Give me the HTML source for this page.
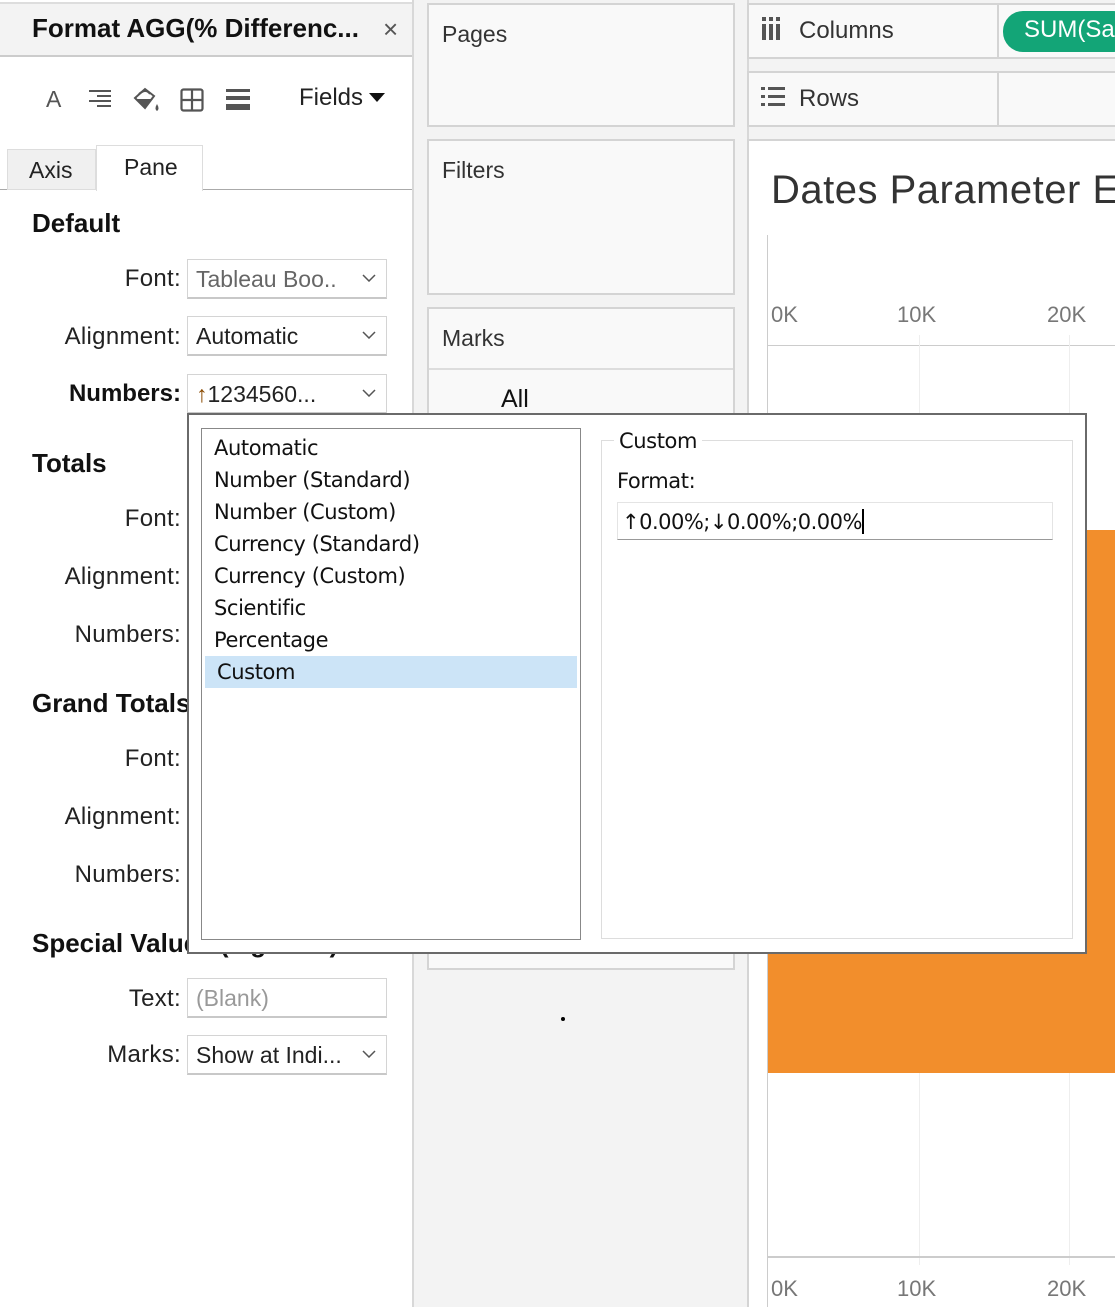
<!DOCTYPE html>
<html><head><meta charset="utf-8"><style>
*{margin:0;padding:0;box-sizing:border-box}
body{width:1115px;height:1307px;position:relative;overflow:hidden;background:#f3f3f3;font-family:"Liberation Sans","DejaVu Sans",sans-serif;color:#111}
.a{position:absolute}
.lbl{position:absolute;font-size:24px;color:#222;text-align:right;width:181px;left:0;letter-spacing:0.3px}
.dd{position:absolute;left:187px;width:200px;height:40px;background:#fff;border:1px solid #d4d4d4;border-bottom:2px solid #c8c8c8;font-size:23px;padding:6px 0 0 8px;color:#222;white-space:nowrap;overflow:hidden}
.dd svg{position:absolute;right:10px;top:14px}
.h{position:absolute;left:32px;font-size:26px;font-weight:bold;color:#111;white-space:nowrap}
.card{position:absolute;background:#f9f9f9;border:2px solid #d4d4d4}
.ct{position:absolute;left:13px;font-size:23px;color:#333}
.li{height:32px;font-size:21px;padding:4px 0 0 12px;font-family:"DejaVu Sans",sans-serif;color:#111;letter-spacing:-0.4px}
.ax{position:absolute;font-size:22px;color:#777}
</style></head><body>
<!-- left panel -->
<div class="a" style="left:0;top:0;width:414px;height:1307px;background:#fff;border-right:2px solid #d8d8d8;overflow:hidden">
<div class="a" style="left:0;top:2px;width:413px;height:55px;background:#f3f3f3;border-top:2px solid #ddd;border-bottom:2px solid #ccc"></div>
<div class="a" style="left:32px;top:13px;font-size:26px;font-weight:bold">Format AGG(% Differenc...</div>
<div class="a" style="left:383px;top:14px;font-size:26px;color:#555">×</div>
<div class="a" style="left:46px;top:86px;font-size:23px;color:#555">A</div>
<svg class="a" style="left:89px;top:89px" width="22" height="20"><g stroke="#555" stroke-width="2"><line x1="0" y1="2" x2="22" y2="2"/><line x1="8" y1="7" x2="22" y2="7"/><line x1="0" y1="12" x2="22" y2="12"/><line x1="8" y1="17" x2="22" y2="17"/></g></svg>
<svg class="a" style="left:132px;top:86px" width="30" height="28"><path d="M3 12 L13 3 L22 10 L13 22 Z" fill="none" stroke="#555" stroke-width="2"/><path d="M4 13 L21 13 L13 22 Z" fill="#555"/><path d="M7 8 Q14 2 18 8" fill="none" stroke="#555" stroke-width="2"/><path d="M25 18 Q22 23 25 25 Q28 23 25 18Z" fill="#555"/></svg>
<svg class="a" style="left:180px;top:88px" width="24" height="24"><rect x="1.5" y="1.5" width="21" height="21" rx="2" fill="none" stroke="#555" stroke-width="2.2"/><line x1="12" y1="1" x2="12" y2="23" stroke="#555" stroke-width="2.2"/><line x1="1" y1="12" x2="23" y2="12" stroke="#555" stroke-width="2.2"/></svg>
<svg class="a" style="left:226px;top:89px" width="24" height="22"><rect x="0" y="0" width="24" height="3" fill="#555"/><rect x="0" y="7" width="24" height="4" fill="#555"/><rect x="0" y="15" width="24" height="6" fill="#555"/></svg>
<div class="a" style="left:299px;top:84px;font-size:24px;color:#222">Fields</div>
<svg class="a" style="left:369px;top:93px" width="16" height="10"><path d="M0 0H16L8 9Z" fill="#111"/></svg>
<div class="a" style="left:0;top:189px;width:412px;height:1px;background:#aaa"></div>
<div class="a" style="left:7px;top:149px;width:89px;height:41px;background:#f0f0f0;border:1px solid #ddd;font-size:23px;padding:7px 0 0 21px;color:#222">Axis</div>
<div class="a" style="left:96px;top:145px;width:107px;height:46px;background:#fff;border:1px solid #ddd;border-bottom:none;font-size:23px;padding:8px 0 0 27px;color:#222">Pane</div>
<div class="h" style="top:208px">Default</div>
<div class="lbl" style="top:265px">Font:</div><div class="dd" style="top:259px;color:#666">Tableau Boo..<svg width="14" height="8"><path d="M1 1L7 7L13 1" fill="none" stroke="#555" stroke-width="1.5"/></svg></div>
<div class="lbl" style="top:323px">Alignment:</div><div class="dd" style="top:316px">Automatic<svg width="14" height="8"><path d="M1 1L7 7L13 1" fill="none" stroke="#555" stroke-width="1.5"/></svg></div>
<div class="lbl" style="top:380px;font-weight:bold;color:#111;letter-spacing:0">Numbers:</div><div class="dd" style="top:374px"><span style="color:#8a4a00">↑</span>1234560...<svg width="14" height="8"><path d="M1 1L7 7L13 1" fill="none" stroke="#555" stroke-width="1.5"/></svg></div>
<div class="h" style="top:448px">Totals</div>
<div class="lbl" style="top:505px">Font:</div>
<div class="lbl" style="top:563px">Alignment:</div>
<div class="lbl" style="top:621px">Numbers:</div>
<div class="h" style="top:688px">Grand Totals</div>
<div class="lbl" style="top:745px">Font:</div>
<div class="lbl" style="top:803px">Alignment:</div>
<div class="lbl" style="top:861px">Numbers:</div>
<div class="h" style="top:928px">Special Values (e.g. Null)</div>
<div class="lbl" style="top:985px">Text:</div><div class="dd" style="top:978px;color:#999">(Blank)</div>
<div class="lbl" style="top:1041px">Marks:</div><div class="dd" style="top:1035px">Show at Indi...<svg width="14" height="8"><path d="M1 1L7 7L13 1" fill="none" stroke="#555" stroke-width="1.5"/></svg></div>
</div>
<!-- middle cards -->
<div class="card" style="left:427px;top:3px;width:308px;height:124px"><div class="ct" style="top:16px">Pages</div></div>
<div class="card" style="left:427px;top:139px;width:308px;height:156px"><div class="ct" style="top:16px">Filters</div></div>
<div class="card" style="left:427px;top:307px;width:308px;height:663px"><div class="ct" style="top:16px">Marks</div><div class="a" style="left:0;top:59px;width:304px;height:2px;background:#ddd"></div><div class="a" style="left:72px;top:76px;font-size:25px">All</div></div>
<div class="a" style="left:561px;top:1017px;width:4px;height:4px;border-radius:2px;background:#000"></div>
<div class="a" style="left:747px;top:0;width:2px;height:1307px;background:#d8d8d8"></div>
<!-- right side, clipped -->
<div class="a" style="left:747px;top:0;width:368px;height:1307px;overflow:hidden">
<div class="card" style="left:0;top:3px;width:380px;height:56px"><div class="a" style="left:248px;top:0;width:2px;height:54px;background:#d4d4d4"></div></div>
<svg class="a" style="left:15px;top:17px" width="20" height="24"><g fill="#555"><rect x="0" y="0" width="4" height="4"/><rect x="7" y="0" width="4" height="4"/><rect x="14" y="0" width="4" height="4"/><rect x="0" y="7" width="4" height="16"/><rect x="7" y="7" width="4" height="16"/><rect x="14" y="7" width="4" height="16"/></g></svg>
<div class="a" style="left:52px;top:17px;font-size:24px;color:#333">Columns</div>
<div class="a" style="left:256px;top:11px;width:130px;height:41px;border-radius:20px;background:#13a577;color:#fff;font-size:24px;padding:5px 0 0 21px;white-space:nowrap">SUM(Sales)</div>
<div class="card" style="left:0;top:71px;width:380px;height:56px"><div class="a" style="left:248px;top:0;width:2px;height:54px;background:#d4d4d4"></div></div>
<svg class="a" style="left:14px;top:87px" width="24" height="20"><g fill="#555"><rect x="0" y="0" width="4" height="3"/><rect x="7" y="0" width="17" height="3"/><rect x="0" y="8" width="4" height="3"/><rect x="7" y="8" width="17" height="3"/><rect x="0" y="16" width="4" height="3"/><rect x="7" y="16" width="17" height="3"/></g></svg>
<div class="a" style="left:52px;top:85px;font-size:24px;color:#333">Rows</div>
<div class="a" style="left:0;top:139px;width:380px;height:1170px;background:#fff;border:2px solid #d4d4d4"></div>
<div class="a" style="left:24px;top:168px;font-size:40px;color:#333;white-space:nowrap;letter-spacing:0.5px">Dates Parameter Example</div>
<div class="a" style="left:20px;top:235px;width:1px;height:1072px;background:#ccc"></div>
<div class="ax" style="left:24px;top:302px">0K</div><div class="ax" style="left:150px;top:302px">10K</div><div class="ax" style="left:300px;top:302px">20K</div>
<div class="a" style="left:20px;top:345px;width:348px;height:1px;background:#ccc"></div>
<div class="a" style="left:172px;top:335px;width:1px;height:930px;background:#eee"></div>
<div class="a" style="left:322px;top:335px;width:1px;height:930px;background:#eee"></div>
<div class="a" style="left:21px;top:530px;width:347px;height:543px;background:#f28e2c"></div>
<div class="a" style="left:20px;top:1256px;width:348px;height:2px;background:#ccc"></div>
<div class="ax" style="left:24px;top:1276px">0K</div><div class="ax" style="left:150px;top:1276px">10K</div><div class="ax" style="left:300px;top:1276px">20K</div>
</div>
<!-- popup -->
<div class="a" style="left:187px;top:413px;width:900px;height:541px;background:#fff;border:2px solid #6a6a6a"></div>
<div class="a" style="left:201px;top:428px;width:380px;height:512px;border:1px solid #888;padding-top:3px">
<div class="li">Automatic</div><div class="li">Number (Standard)</div><div class="li">Number (Custom)</div><div class="li">Currency (Standard)</div><div class="li">Currency (Custom)</div><div class="li">Scientific</div><div class="li">Percentage</div><div class="li" style="background:#cce4f7;margin:0 3px;padding-left:12px">Custom</div>
</div>
<div class="a" style="left:601px;top:440px;width:472px;height:499px;border:1px solid #ddd"></div>
<div class="a" style="left:614px;top:429px;background:#fff;padding:0 5px;font-size:21px;font-family:'DejaVu Sans',sans-serif;letter-spacing:-0.4px">Custom</div>
<div class="a" style="left:617px;top:469px;font-size:21px;font-family:'DejaVu Sans',sans-serif;letter-spacing:-0.4px">Format:</div>
<div class="a" style="left:617px;top:502px;width:436px;height:38px;border:1px solid #e4e4e4;border-bottom:1px solid #999;font-size:21px;font-family:'DejaVu Sans',sans-serif;padding:6px 0 0 4px;letter-spacing:-0.5px;white-space:nowrap;overflow:hidden">↑0.00%;↓0.00%;0.00%<span style="display:inline-block;width:2px;height:25px;background:#000;vertical-align:-5px"></span></div>
</body></html>
